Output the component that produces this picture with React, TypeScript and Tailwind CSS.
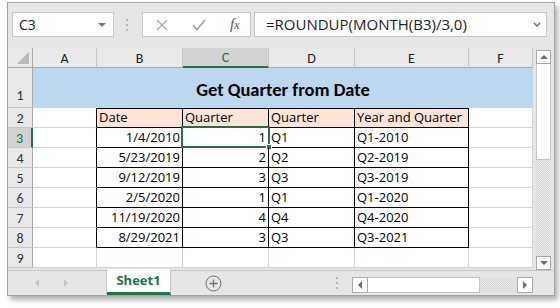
import React from "react";

const cellFont = "font-[family-name:Carlito,Lato,sans-serif]";
const uiFont = "font-[family-name:'Segoe_UI','Open_Sans',sans-serif]";
const txt = "font-[family-name:'Open_Sans',sans-serif] text-[13px] text-black";

const rows: string[][] = [
  ["1/4/2010", "1", "Q1", "Q1-2010"],
  ["5/23/2019", "2", "Q2", "Q2-2019"],
  ["9/12/2019", "3", "Q3", "Q3-2019"],
  ["2/5/2020", "1", "Q1", "Q1-2020"],
  ["11/19/2020", "4", "Q4", "Q4-2020"],
  ["8/29/2021", "3", "Q3", "Q3-2021"],
];

function ColHeader({ label, selected }: { label: string; selected?: boolean }) {
  return (
    <div
      className={
        selected
          ? "flex items-center justify-center bg-[#d2d2d2] border-r border-[#c6c6c6] border-b-2 border-b-[#217346] text-[#1e6b41] text-[14px] pt-[1px]"
          : "flex items-center justify-center bg-[#e9e9e9] border-r border-[#c6c6c6] border-b border-b-[#ababab] text-[#222] text-[14px] pt-[1px]"
      }
    >
      {label}
    </div>
  );
}

function RowHeader({ n, selected }: { n: number; selected?: boolean }) {
  return (
    <div
      className={
        selected
          ? "flex items-center justify-center bg-[#d2d2d2] border-r-2 border-r-[#217346] border-b border-[#c6c6c6] text-[#1e6b41] text-[14px] pt-[1px]"
          : "flex items-center justify-center bg-[#e9e9e9] border-r border-r-[#ababab] border-b border-[#c6c6c6] text-[#333] text-[14px] pt-[1px]"
      }
    >
      {n}
    </div>
  );
}

function Tri({ dir, color, size = 4 }: { dir: "up" | "down" | "left" | "right"; color: string; size?: number }) {
  const s = size;
  let pts = "";
  if (dir === "up") pts = `0,${s} ${s},0 ${2 * s},${s}`;
  if (dir === "down") pts = `0,0 ${2 * s},0 ${s},${s}`;
  if (dir === "left") pts = `${s},0 ${s},${2 * s} 0,${s}`;
  if (dir === "right") pts = `0,0 0,${2 * s} ${s},${s}`;
  const w = dir === "up" || dir === "down" ? 2 * s : s;
  const h = dir === "up" || dir === "down" ? s : 2 * s;
  return (
    <svg width={w} height={h} viewBox={`0 0 ${w} ${h}`}>
      <polygon points={pts} fill={color} />
    </svg>
  );
}

function Dots() {
  return (
    <div className="flex flex-col gap-[3px]">
      <div className="w-[2px] h-[2px] bg-[#b5b5b5]" />
      <div className="w-[2px] h-[2px] bg-[#b5b5b5]" />
      <div className="w-[2px] h-[2px] bg-[#b5b5b5]" />
    </div>
  );
}

export default function App() {
  return (
    <div className="w-[560px] h-[308px] bg-white overflow-hidden pt-[2px] pl-[7px]">
      <div className="w-[548px] h-[294px] border border-[#a3a3a3] bg-[#e6e6e6] shadow-[3px_4px_5px_rgba(0,0,0,0.3)] flex flex-col">
        {/* Formula bar */}
        <div className={`h-[45px] flex items-start pt-[9px] pl-[4px] ${uiFont}`}>
          <div className="w-[102px] h-[25px] bg-white border border-[#c6c6c6] flex items-center justify-between pl-[6px] pr-[7px] text-[14px] text-[#222]">
            <span>C3</span>
            <Tri dir="down" color="#777" size={4} />
          </div>
          <div className="ml-[12px] mt-[7px]">
            <Dots />
          </div>
          <div className="ml-[14px] w-[109px] h-[25px] bg-white border border-[#c6c6c6] flex items-center">
            <svg width="12" height="12" viewBox="0 0 12 12" className="ml-[13px]">
              <path d="M1 1 L11 11 M11 1 L1 11" stroke="#a8a8a8" strokeWidth="1.3" fill="none" />
            </svg>
            <svg width="14" height="12" viewBox="0 0 14 12" className="ml-[24px]">
              <path d="M1 6 L5 10.5 L13 1" stroke="#a8a8a8" strokeWidth="1.8" fill="none" />
            </svg>
            <span className="ml-[24px] text-[15px] italic font-[family-name:'Liberation_Serif',serif] text-[#555] leading-none">
              f<span className="text-[12px]">x</span>
            </span>
          </div>
          <div className="ml-[3px] w-[293px] h-[25px] bg-white border border-[#c6c6c6] flex items-center justify-between pl-[11px] pr-[5px] text-[15px] text-[#222]">
            <span>=ROUNDUP(MONTH(B3)/3,0)</span>
            <svg width="8" height="6" viewBox="0 0 8 6">
              <path d="M1 1 L4 4 L7 1" stroke="#666" strokeWidth="1.3" fill="none" />
            </svg>
          </div>
        </div>

        {/* Sheet */}
        <div className="h-[222px] flex">
          <div className={`w-[525px] h-[220px] grid grid-cols-[25px_64px_86px_86px_86px_114px_64px] grid-rows-[20px_40px_repeat(8,20px)] bg-white ${cellFont}`}>
            {/* corner */}
            <div className="bg-[#e9e9e9] border-r border-b border-[#ababab] flex items-end justify-end pr-[3px] pb-[3px]">
              <svg width="12" height="12" viewBox="0 0 12 12">
                <polygon points="12,0 12,12 0,12" fill="#b9b9b9" />
              </svg>
            </div>
            <ColHeader label="A" />
            <ColHeader label="B" />
            <ColHeader label="C" selected />
            <ColHeader label="D" />
            <ColHeader label="E" />
            <ColHeader label="F" />

            {/* Row 1 */}
            <div className="flex items-end justify-center bg-[#e9e9e9] border-r border-r-[#ababab] border-b border-[#c6c6c6] text-[#333] text-[14px] pb-[1px]">
              1
            </div>
            <div className="col-span-6 bg-[#bdd7ee] flex items-center justify-center pt-[3px] text-[18.5px] font-bold text-black">
              Get Quarter from Date
            </div>

            {/* Row 2 */}
            <RowHeader n={2} />
            <div className="border-r border-r-black border-b border-[#d4d4d4]" />
            <div className={`bg-[#fce4d6] border-r border-b border-t border-black flex items-center pl-[2px] ${txt}`}>Date</div>
            <div className={`bg-[#fce4d6] border-r border-b border-t border-black flex items-center pl-[2px] ${txt}`}>Quarter</div>
            <div className={`bg-[#fce4d6] border-r border-b border-t border-black flex items-center pl-[2px] ${txt}`}>Quarter</div>
            <div className={`bg-[#fce4d6] border-r border-b border-t border-black flex items-center pl-[2px] ${txt}`}>Year and Quarter</div>
            <div className="border-r border-b border-[#d4d4d4]" />

            {rows.map((r, i) => (
              <React.Fragment key={i}>
                <RowHeader n={i + 3} selected={i === 0} />
                <div className="border-r border-r-black border-b border-[#d4d4d4]" />
                <div className={`border-r border-b border-black flex items-center justify-end pr-[2px] pt-[1px] ${txt}`}>{r[0]}</div>
                <div className={`relative border-r border-b border-black flex items-center justify-end pr-[2px] pt-[1px] ${txt}`}>
                  {r[1]}
                  {i === 0 && (
                    <div className="absolute -left-[2px] -top-[2px] -right-[2px] -bottom-[1px] border-2 border-[#217346]">
                      <div className="absolute -right-[4px] -bottom-[4px] w-[6px] h-[6px] bg-[#217346] border border-white" />
                    </div>
                  )}
                </div>
                <div className={`border-r border-b border-black flex items-center pl-[2px] pt-[1px] ${txt}`}>{r[2]}</div>
                <div className={`border-r border-b border-black flex items-center pl-[2px] pt-[1px] ${txt}`}>{r[3]}</div>
                <div className="border-r border-b border-[#d4d4d4]" />
              </React.Fragment>
            ))}

            {/* Row 9 */}
            <RowHeader n={9} />
            <div className="border-r border-b border-[#d4d4d4]" />
            <div className="border-r border-b border-[#d4d4d4]" />
            <div className="border-r border-b border-[#d4d4d4]" />
            <div className="border-r border-b border-[#d4d4d4]" />
            <div className="border-r border-b border-[#d4d4d4]" />
            <div className="border-r border-b border-[#d4d4d4]" />
          </div>

          {/* Vertical scrollbar */}
          <div className="ml-[3px] mt-[2px] w-[15px] h-[220px] flex flex-col">
            <div className="h-[14px] bg-white border border-[#ababab] flex items-center justify-center">
              <Tri dir="up" color="#6d6d6d" size={4} />
            </div>
            <div className="h-[96px] bg-white border-x border-b border-[#c6c6c6]" />
            <div className="flex-1 bg-[repeating-conic-gradient(#d9d9d9_0_25%,#e9e9e9_0_50%)] bg-[length:2px_2px]" />
            <div className="h-[14px] bg-white border border-[#ababab] flex items-center justify-center">
              <Tri dir="down" color="#6d6d6d" size={4} />
            </div>
          </div>
        </div>

        {/* Tab bar */}
        <div className={`h-[25px] flex items-stretch border-t border-[#c6c6c6] ${uiFont}`}>
          <div className="w-[99px] border-r border-[#c6c6c6] flex items-center pl-[27px] gap-[25px]">
            <Tri dir="left" color="#c4c4c4" size={4} />
            <Tri dir="right" color="#c4c4c4" size={4} />
          </div>
          <div className="-mt-[2px] w-[64px] bg-white border-r border-[#c6c6c6] border-b-[3px] border-b-[#217346] flex items-center justify-center text-[13px] font-bold text-[#217346]">
            Sheet1
          </div>
          <div className="ml-[34px] flex items-center">
            <svg width="17" height="17" viewBox="0 0 17 17">
              <circle cx="8.5" cy="8.5" r="7.5" stroke="#6f6f6f" strokeWidth="1" fill="none" />
              <path d="M8.5 4.5 V12.5 M4.5 8.5 H12.5" stroke="#6f6f6f" strokeWidth="1.3" />
            </svg>
          </div>
          <div className="ml-[114px] flex items-center">
            <Dots />
          </div>
          <div className="ml-[14px] mt-[6px] w-[181px] h-[16px] flex">
            <div className="w-[16px] bg-white border border-[#ababab] flex items-center justify-center">
              <Tri dir="left" color="#6d6d6d" size={4} />
            </div>
            <div className="w-[112px] bg-white border-y border-r border-[#c6c6c6]" />
            <div className="flex-1 bg-[repeating-conic-gradient(#d9d9d9_0_25%,#e9e9e9_0_50%)] bg-[length:2px_2px]" />
            <div className="w-[16px] bg-white border border-[#ababab] flex items-center justify-center">
              <Tri dir="right" color="#6d6d6d" size={4} />
            </div>
          </div>
        </div>
      </div>
    </div>
  );
}
